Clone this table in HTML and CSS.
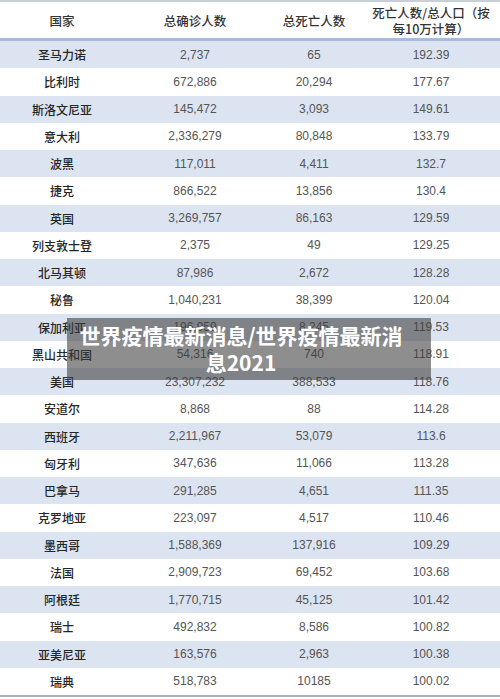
FILE: index.html
```html
<!DOCTYPE html>
<html lang="zh-CN">
<head>
<meta charset="utf-8">
<title>世界疫情最新消息</title>
<link rel="stylesheet" href="styles.css">
</head>
<body>
<div class="page">
  <div class="table">
    <div class="row head">
      <div class="cell">国家</div>
      <div class="cell">总确诊人数</div>
      <div class="cell">总死亡人数</div>
      <div class="cell two">死亡人数/总人口（按<br>每10万计算）</div>
    </div>
    <div class="row alt"><div class="cell name">圣马力诺</div><div class="cell num">2,737</div><div class="cell num">65</div><div class="cell num">192.39</div></div>
    <div class="row"><div class="cell name">比利时</div><div class="cell num">672,886</div><div class="cell num">20,294</div><div class="cell num">177.67</div></div>
    <div class="row alt"><div class="cell name">斯洛文尼亚</div><div class="cell num">145,472</div><div class="cell num">3,093</div><div class="cell num">149.61</div></div>
    <div class="row"><div class="cell name">意大利</div><div class="cell num">2,336,279</div><div class="cell num">80,848</div><div class="cell num">133.79</div></div>
    <div class="row alt"><div class="cell name">波黑</div><div class="cell num">117,011</div><div class="cell num">4,411</div><div class="cell num">132.7</div></div>
    <div class="row"><div class="cell name">捷克</div><div class="cell num">866,522</div><div class="cell num">13,856</div><div class="cell num">130.4</div></div>
    <div class="row alt"><div class="cell name">英国</div><div class="cell num">3,269,757</div><div class="cell num">86,163</div><div class="cell num">129.59</div></div>
    <div class="row"><div class="cell name">列支敦士登</div><div class="cell num">2,375</div><div class="cell num">49</div><div class="cell num">129.25</div></div>
    <div class="row alt"><div class="cell name">北马其顿</div><div class="cell num">87,986</div><div class="cell num">2,672</div><div class="cell num">128.28</div></div>
    <div class="row"><div class="cell name">秘鲁</div><div class="cell num">1,040,231</div><div class="cell num">38,399</div><div class="cell num">120.04</div></div>
    <div class="row alt"><div class="cell name">保加利亚</div><div class="cell num">196,959</div><div class="cell num">8,245</div><div class="cell num">119.53</div></div>
    <div class="row"><div class="cell name">黑山共和国</div><div class="cell num">54,316</div><div class="cell num">740</div><div class="cell num">118.91</div></div>
    <div class="row alt"><div class="cell name">美国</div><div class="cell num">23,307,232</div><div class="cell num">388,533</div><div class="cell num">118.76</div></div>
    <div class="row"><div class="cell name">安道尔</div><div class="cell num">8,868</div><div class="cell num">88</div><div class="cell num">114.28</div></div>
    <div class="row alt"><div class="cell name">西班牙</div><div class="cell num">2,211,967</div><div class="cell num">53,079</div><div class="cell num">113.6</div></div>
    <div class="row"><div class="cell name">匈牙利</div><div class="cell num">347,636</div><div class="cell num">11,066</div><div class="cell num">113.28</div></div>
    <div class="row alt"><div class="cell name">巴拿马</div><div class="cell num">291,285</div><div class="cell num">4,651</div><div class="cell num">111.35</div></div>
    <div class="row"><div class="cell name">克罗地亚</div><div class="cell num">223,097</div><div class="cell num">4,517</div><div class="cell num">110.46</div></div>
    <div class="row alt"><div class="cell name">墨西哥</div><div class="cell num">1,588,369</div><div class="cell num">137,916</div><div class="cell num">109.29</div></div>
    <div class="row"><div class="cell name">法国</div><div class="cell num">2,909,723</div><div class="cell num">69,452</div><div class="cell num">103.68</div></div>
    <div class="row alt"><div class="cell name">阿根廷</div><div class="cell num">1,770,715</div><div class="cell num">45,125</div><div class="cell num">101.42</div></div>
    <div class="row"><div class="cell name">瑞士</div><div class="cell num">492,832</div><div class="cell num">8,586</div><div class="cell num">100.82</div></div>
    <div class="row alt"><div class="cell name">亚美尼亚</div><div class="cell num">163,576</div><div class="cell num">2,963</div><div class="cell num">100.38</div></div>
    <div class="row last"><div class="cell name">瑞典</div><div class="cell num">518,783</div><div class="cell num">10185</div><div class="cell num">100.02</div></div>
  </div>
  <div class="caption">世界疫情最新消息/世界疫情最新消息2021</div>
</div>
</body>
</html>
```
FILE: styles.css
```css
html, body {
  margin: 0;
  padding: 0;
  background: #ffffff;
}
.page {
  position: relative;
  width: 500px;
  height: 699px;
  overflow: hidden;
  font-family: "Noto Sans CJK SC", "Liberation Sans", sans-serif;
}
.table {
  border-top: 2px solid #c9cfd6;
}
.row {
  display: grid;
  grid-template-columns: 124px 142px 96px 138px;
  height: 27.25px;
  align-items: center;
  background: #ffffff;
}
.row.alt {
  background: #dce4f1;
}
.row.head {
  height: 36px;
  border-bottom: 3px solid #a8bbda;
  font-size: 12.5px;
  color: #333333;
  font-weight: 500;
}
.row.last {
  border-bottom: 2px solid #a9b3c0;
}
.cell {
  text-align: center;
  white-space: nowrap;
}
.cell.two {
  font-size: 12.5px;
  line-height: 16px;
  padding-top: 1px;
}
.name {
  font-size: 12px;
  color: #262626;
  font-weight: 500;
}
.num {
  font-family: "Liberation Sans", "Noto Sans CJK SC", sans-serif;
  font-size: 12px;
  color: #555555;
}
.caption {
  position: absolute;
  left: 67px;
  top: 318px;
  width: 364px;
  height: 62px;
  box-sizing: border-box;
  padding: 4px 20px 0 4px;
  background: rgba(60, 60, 60, 0.58);
  color: #ffffff;
  font-size: 21px;
  font-weight: 700;
  line-height: 27px;
  text-align: center;
}
```
